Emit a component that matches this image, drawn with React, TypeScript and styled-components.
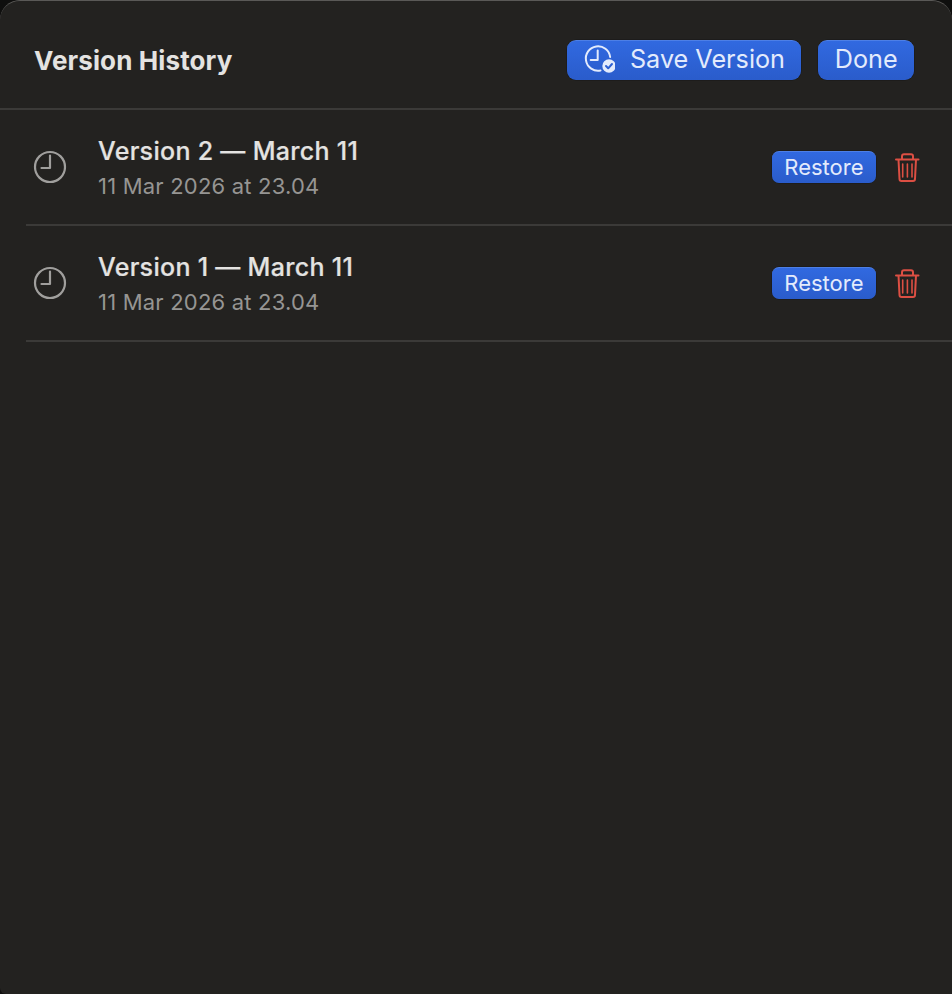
import React from 'react'
import styled, { createGlobalStyle } from 'styled-components'

const GlobalStyle = createGlobalStyle`
  html, body {
    margin: 0;
    padding: 0;
    background: #0f0f0e;
  }
  * {
    box-sizing: border-box;
  }
`

const Sheet = styled.div`
  width: 952px;
  height: 994px;
  overflow: hidden;
  background: #232220;
  border-top: 1px solid #5a5957;
  border-radius: 20px 20px 0 6px;
  font-family: Inter, 'Liberation Sans', sans-serif;
  -webkit-font-smoothing: antialiased;
`

const Header = styled.header`
  display: flex;
  align-items: center;
  justify-content: space-between;
  height: 109px;
  padding: 12px 38px 0 34px;
  border-bottom: 2px solid #3b3a38;
`

const Title = styled.h1`
  margin: 0;
  font-size: 26px;
  font-weight: 700;
  letter-spacing: 0.12px;
  color: #e4e3e1;
`

const HeaderActions = styled.div`
  display: flex;
  gap: 17px;
  margin-top: -2px;
`

const Button = styled.button<{ $small?: boolean }>`
  display: flex;
  align-items: center;
  justify-content: center;
  gap: 15px;
  height: ${(p) => (p.$small ? 32 : 40)}px;
  padding: ${(p) => (p.$small ? '0 12.5px 2px' : '0 16.4px 3px')};
  border: none;
  border-top: 1px solid #4d7fe6;
  border-radius: ${(p) => (p.$small ? 7 : 9)}px;
  background: linear-gradient(#3169e0, #2a5ccb);
  color: #e3ebfc;
  font-family: inherit;
  font-size: ${(p) => (p.$small ? 22 : 25.2)}px;
  font-weight: 400;
  box-shadow: 0 0 0 0.5px rgba(0, 0, 0, 0.3);
`

const Row = styled.div`
  display: flex;
  align-items: center;
  height: 116px;
  margin-left: 26px;
  padding: 0 31px 0 7px;
  border-bottom: 2px solid #3b3a38;
`

const RowIcon = styled.svg`
  flex: none;
  width: 34px;
  height: 34px;
  color: #a09f9d;
`

const RowText = styled.div`
  flex: 1;
  display: flex;
  flex-direction: column;
  gap: 7px;
  margin-left: 31px;
`

const RowTitle = styled.div`
  font-size: 25px;
  font-weight: 500;
  letter-spacing: 0.3px;
  -webkit-text-stroke: 0.2px #e4e3e1;
  color: #e4e3e1;
`

const RowDate = styled.div`
  font-size: 22px;
  letter-spacing: 0.2px;
  color: #969593;
`

const TrashButton = styled.button`
  display: flex;
  margin-left: 19px;
  padding: 0;
  border: none;
  background: none;
  color: #dc4f43;
`

function ClockIcon() {
  return (
    <RowIcon viewBox="0 0 34 34" fill="none" stroke="currentColor" strokeWidth="2.2">
      <circle cx="17" cy="17" r="15" />
      <path d="M17 5.5V18H8.5" strokeLinecap="round" strokeLinejoin="round" />
    </RowIcon>
  )
}

function SaveIcon() {
  return (
    <svg width="32" height="32" viewBox="0 0 32 32" fill="none" stroke="currentColor" strokeWidth="2">
      <path d="M17.5 27.45A12.2 12.2 0 1 1 27.15 14" strokeLinecap="round" />
      <path d="M14.7 7.5V17H7.7" strokeLinecap="round" strokeLinejoin="round" />
      <circle cx="26" cy="23" r="6.7" fill="currentColor" stroke="none" />
      <path d="M23 23l2.2 2.3 3.8-4.3" stroke="#2d60d2" strokeLinecap="round" strokeLinejoin="round" />
    </svg>
  )
}

function TrashIcon() {
  return (
    <svg width="26" height="30" viewBox="0 0 26 30" fill="none" stroke="currentColor" strokeWidth="2">
      <path d="M1 7.5h22.5" strokeLinecap="round" />
      <path d="M7 7V4.2a2 2 0 0 1 2-2h7a2 2 0 0 1 2 2V7" />
      <path d="M3.5 7.5l1 19.5a2 2 0 0 0 2 2h11.5a2 2 0 0 0 2-2l1-19.5" />
      <path d="M7.7 12v13M12.4 12v13M17 12v13" strokeWidth="1.6" strokeLinecap="round" />
    </svg>
  )
}

const VERSIONS = [
  { id: 2, title: 'Version 2 — March 11', date: '11 Mar 2026 at 23.04' },
  { id: 1, title: 'Version 1 — March 11', date: '11 Mar 2026 at 23.04' },
]

export default function App() {
  return (
    <>
      <GlobalStyle />
      <Sheet>
        <Header>
          <Title>Version History</Title>
          <HeaderActions>
            <Button>
              <SaveIcon />
              Save Version
            </Button>
            <Button>Done</Button>
          </HeaderActions>
        </Header>
        {VERSIONS.map((version) => (
          <Row key={version.id}>
            <ClockIcon />
            <RowText>
              <RowTitle>{version.title}</RowTitle>
              <RowDate>{version.date}</RowDate>
            </RowText>
            <Button $small>Restore</Button>
            <TrashButton>
              <TrashIcon />
            </TrashButton>
          </Row>
        ))}
      </Sheet>
    </>
  )
}
